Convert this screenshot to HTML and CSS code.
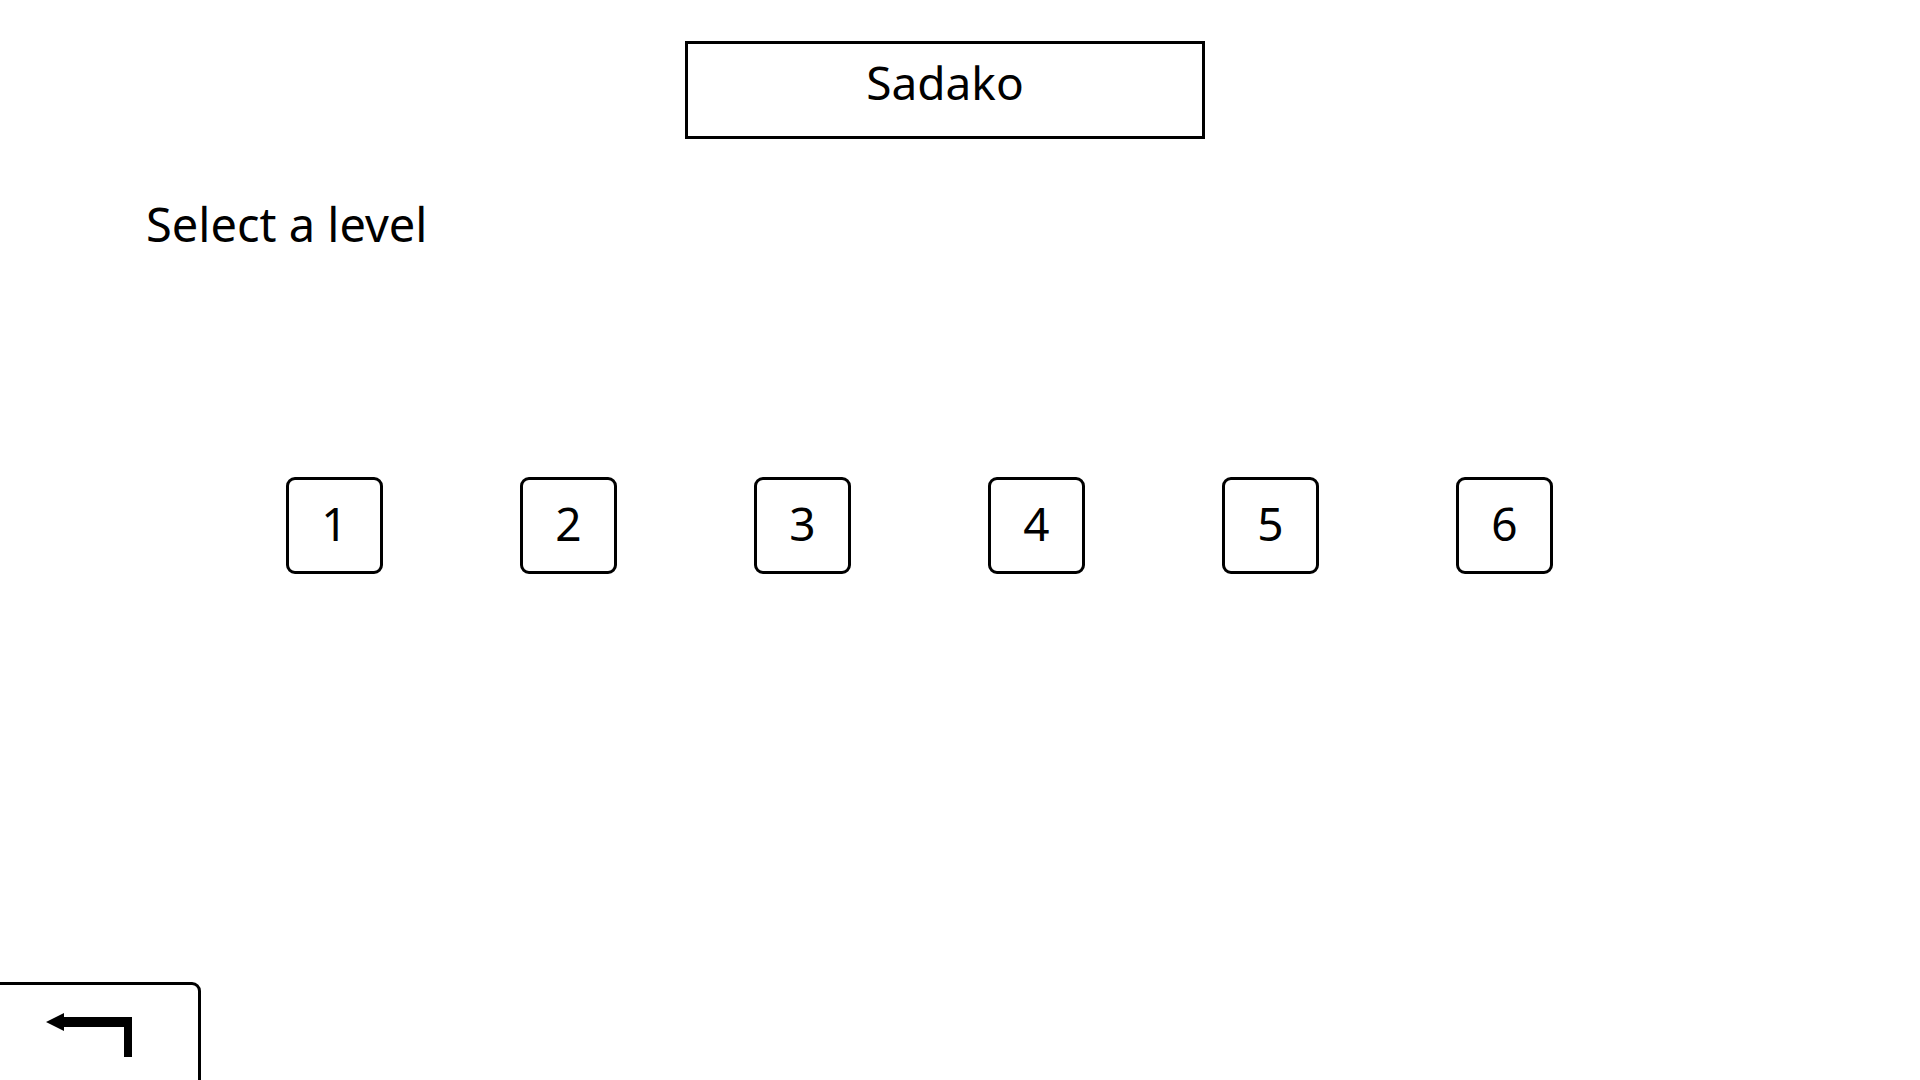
FILE: index.html
```html
<!DOCTYPE html>
<html lang="en">
<head>
<meta charset="utf-8">
<title>Sadako</title>
<link rel="stylesheet" href="styles.css">
</head>
<body>
<div class="page">
  <header class="title-wrap">
    <div class="title-box">Sadako</div>
  </header>
  <h2 class="subtitle">Select a level</h2>
  <div class="levels">
    <button class="level">1</button>
    <button class="level">2</button>
    <button class="level">3</button>
    <button class="level">4</button>
    <button class="level">5</button>
    <button class="level">6</button>
  </div>
</div>
<button class="back" aria-label="Back">
  <svg class="back-icon" width="90" height="50" viewBox="0 0 90 50">
    <polygon points="0,22 18,13 18,17 86,17 86,57 78,57 78,27 18,27 18,31" fill="#000"/>
  </svg>
</button>
</body>
</html>
```
FILE: styles.css
```css
html, body {
  margin: 0;
  padding: 0;
  background: #fff;
  height: 100%;
  overflow: hidden;
}
body {
  font-family: "Noto Sans", "DejaVu Sans", sans-serif;
  color: #000;
}
.page {
  display: flex;
  flex-direction: column;
  width: 1890px;
}
.title-wrap {
  display: flex;
  justify-content: center;
  padding-top: 41px;
}
.title-box {
  box-sizing: border-box;
  width: 520px;
  height: 98px;
  border: 3px solid #000;
  padding-bottom: 16px;
  display: flex;
  align-items: center;
  justify-content: center;
  font-size: 46px;
  line-height: 61px;
}
.subtitle {
  margin: 55px 0 0 146px;
  font-weight: normal;
  font-size: 47px;
  line-height: 61px;
}
.levels {
  display: flex;
  gap: 137px;
  padding-left: 286px;
  margin-top: 222px;
}
.level {
  box-sizing: border-box;
  width: 97px;
  height: 97px;
  border: 3px solid #000;
  border-radius: 9px;
  background: #fff;
  font-family: "Noto Sans", "DejaVu Sans", sans-serif;
  font-size: 46px;
  line-height: 1;
  color: #000;
  padding: 0 0 5px 0;
  display: flex;
  align-items: center;
  justify-content: center;
}
.back {
  position: fixed;
  left: -10px;
  top: 982px;
  box-sizing: border-box;
  width: 211px;
  height: 130px;
  border: 3px solid #000;
  border-radius: 9px;
  background: #fff;
  padding: 0;
  display: flex;
  align-items: flex-start;
}
.back-icon {
  display: block;
  margin: 15px 0 0 53px;
  overflow: visible;
}
```
